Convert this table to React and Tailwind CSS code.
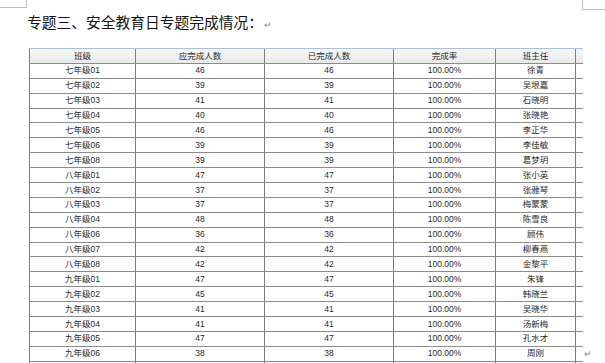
import React from "react";

const rows = [
  ["七年级01", 46, "徐青"],
  ["七年级02", 39, "吴垠嘉"],
  ["七年级03", 41, "石晓明"],
  ["七年级04", 40, "张晓艳"],
  ["七年级05", 46, "李正华"],
  ["七年级06", 39, "李佳敏"],
  ["七年级08", 39, "葛梦玥"],
  ["八年级01", 47, "张小英"],
  ["八年级02", 37, "张雅琴"],
  ["八年级03", 37, "梅蒙蒙"],
  ["八年级04", 48, "陈雪良"],
  ["八年级06", 36, "顾伟"],
  ["八年级07", 42, "柳春燕"],
  ["八年级08", 42, "金黎平"],
  ["九年级01", 47, "朱锋"],
  ["九年级02", 45, "韩晓兰"],
  ["九年级03", 41, "吴晓华"],
  ["九年级04", 41, "汤新梅"],
  ["九年级05", 47, "孔水才"],
  ["九年级06", 38, "周刚"],
];

const font = { fontFamily: '"Liberation Sans", "Noto Sans CJK SC", sans-serif' };

function Row({ cells, header }) {
  const base =
    "flex items-center justify-center border-r border-[#7c7c7c] h-full";
  return (
    <div
      className={
        "flex h-[14.9px] border-b border-[#8c8c8c] shadow-[0_1px_0_#c8c8c8] " +
        (header ? "bg-gradient-to-b from-[#f7f7f7] to-[#e9e9e9]" : "bg-white")
      }
    >
      <div className={base + " w-[107px] border-l"}>{cells[0]}</div>
      <div className={base + " w-[129px]"}>{cells[1]}</div>
      <div className={base + " w-[129px]"}>{cells[2]}</div>
      <div className={base + " w-[102px]"}>{cells[3]}</div>
      <div className={base + " w-[80px]"}>{cells[4]}</div>
      <div className="w-[6px] h-full"></div>
    </div>
  );
}

export default function App() {
  return (
    <div className="relative w-[605px] h-[363px] overflow-hidden bg-white">
      <div className="absolute left-0 top-0 w-[27px] h-[8px] border-r border-b border-[#c0c0c0]"></div>
      <div className="absolute left-[582px] top-0 w-[30px] h-[10px] border-l border-b border-[#c0c0c0]"></div>

      <div
        className="pl-[27px] pt-[12px] h-[48px] text-[14.75px] leading-[20px] text-[#111]"
        style={{ fontFamily: '"Noto Sans CJK SC", "Liberation Sans", sans-serif' }}
      >
        专题三、安全教育日专题完成情况：
        <span className="text-[9px] text-[#888] ml-[1px]">↵</span>
      </div>

      <div
        className="ml-[29px] w-[554px] border-t border-[#a8c0dc] text-[8.5px] text-[#2a2a2a]"
        style={font}
      >
        <Row header cells={["班级", "应完成人数", "已完成人数", "完成率", "班主任"]} />
        {rows.map((r) => (
          <Row key={r[0]} cells={[r[0], r[1], r[1], "100.00%", r[2]]} />
        ))}
        <Row cells={["", "", "", "", ""]} />
      </div>

      <div className="absolute left-[584px] top-[349px] text-[9px] leading-[10px] text-[#888]">↵</div>
    </div>
  );
}
